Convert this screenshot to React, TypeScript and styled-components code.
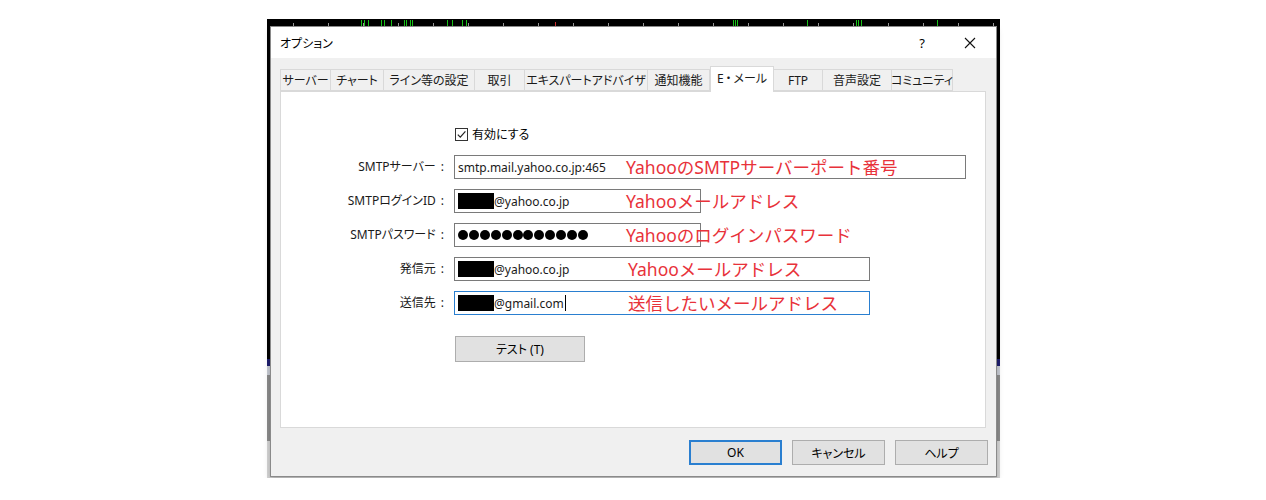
import React from 'react';
import styled, { createGlobalStyle } from 'styled-components';

const GlobalStyle = createGlobalStyle`
  body {
    margin: 0;
    background: #ffffff;
    font-family: "Noto Sans", "Noto Sans CJK JP", sans-serif;
  }
`;

const tabs = [
  { label: 'サーバー', width: 51 },
  { label: 'チャート', width: 53 },
  { label: 'ライン等の設定', width: 91 },
  { label: '取引', width: 50 },
  { label: 'エキスパートアドバイザ', width: 123 },
  { label: '通知機能', width: 62 },
  { label: 'E\u2009・\u2009メール', width: 64, active: true },
  { label: 'FTP', width: 49 },
  { label: '音声設定', width: 69 },
  { label: 'コミュニティ', width: 61 },
];

type FieldData = {
  label: string;
  width: number;
  value?: string;
  redact?: boolean;
  dots?: number;
  note: string;
  noteLeft: number;
  focused?: boolean;
  caret?: boolean;
};

const fields: FieldData[] = [
  { label: 'SMTPサーバー', width: 512, value: 'smtp.mail.yahoo.co.jp:465', note: 'YahooのSMTPサーバーポート番号', noteLeft: 172 },
  { label: 'SMTPログインID', width: 247, redact: true, value: '@yahoo.co.jp', note: 'Yahooメールアドレス', noteLeft: 172 },
  { label: 'SMTPパスワード', width: 247, dots: 12, note: 'Yahooのログインパスワード', noteLeft: 172 },
  { label: '発信元', width: 416, redact: true, value: '@yahoo.co.jp', note: 'Yahooメールアドレス', noteLeft: 174 },
  { label: '送信先', width: 416, redact: true, value: '@gmail.com', note: '送信したいメールアドレス', noteLeft: 174, focused: true, caret: true },
];

// chart ticks along the top edge of the terminal window behind the dialog
const whiteTicks = Array.from({ length: 21 }, (_, i) => 26 + i * 35);
const greenTicks = [94, 97, 101, 114, 117, 124, 137, 139, 143, 145, 180, 185, 195, 199, 466, 468, 470, 540, 589, 591, 594, 670];

const ChartTicks = () => (
  <svg width="733" height="7" viewBox="0 0 733 7" style={{ display: 'block' }}>
    {whiteTicks.map((x) => (
      <line key={`w${x}`} x1={x + 0.5} y1="4" x2={x + 0.5} y2="7" stroke="#9a9a9a" strokeWidth="1" />
    ))}
    {greenTicks.map((x) => (
      <line key={`g${x}`} x1={x + 0.5} y1="1" x2={x + 0.5} y2="7" stroke="#19c219" strokeWidth="1" />
    ))}
    <line x1="288.5" y1="3" x2="288.5" y2="7" stroke="#d03030" strokeWidth="1" />
  </svg>
);

const App = () => {
  return (
    <>
      <GlobalStyle />
      <Page>
        <ChartWindow>
          <ChartTicks />
          <Dialog>
            <TitleBar>
              <Title>オプション</Title>
              <TitleButton>?</TitleButton>
              <TitleButton>
                <svg width="12" height="12" viewBox="0 0 12 12">
                  <path d="M1 1 L11 11 M11 1 L1 11" stroke="#111" strokeWidth="1.1" fill="none" />
                </svg>
              </TitleButton>
            </TitleBar>

            <Body>
              <TabStrip>
                {tabs.map((t) => (
                  <Tab key={t.label} $width={t.width} $active={!!t.active}>
                    {t.label}
                  </Tab>
                ))}
              </TabStrip>

              <Panel>
                <Form>
                  <CheckRow>
                    <CheckBox>
                      <svg width="11" height="11" viewBox="0 0 11 11">
                        <path d="M1.8 5.6 L4.3 8.2 L9.4 2.4" stroke="#222" strokeWidth="1.2" fill="none" />
                      </svg>
                    </CheckBox>
                    有効にする
                  </CheckRow>

                  {fields.map((f) => (
                    <React.Fragment key={f.label}>
                      <Label>
                        {f.label}
                        <Colon>:</Colon>
                      </Label>
                      <FieldCell>
                        <InputBox $width={f.width} $focused={!!f.focused}>
                          {f.redact && <Redact />}
                          {f.value}
                          {f.dots && Array.from({ length: f.dots }, (_, i) => <Dot key={i} />)}
                          {f.caret && <Caret />}
                        </InputBox>
                        <Note $left={f.noteLeft}>{f.note}</Note>
                      </FieldCell>
                    </React.Fragment>
                  ))}

                  <TestRow>
                    <TestButton>テスト (T)</TestButton>
                  </TestRow>
                </Form>
              </Panel>

              <Footer>
                <DialogButton $primary>OK</DialogButton>
                <DialogButton>キャンセル</DialogButton>
                <DialogButton>ヘルプ</DialogButton>
              </Footer>
            </Body>
          </Dialog>
        </ChartWindow>
      </Page>
    </>
  );
};

const Page = styled.div`
  padding: 19px 0 0 267px;
`;

const ChartWindow = styled.div`
  width: 733px;
  height: 459px;
  display: flex;
  flex-direction: column;
  align-items: center;
  background: linear-gradient(
    to bottom,
    #000000 0px,
    #000000 340px,
    #1e1e6e 340px,
    #1e1e6e 347px,
    #c8ccd4 347px,
    #c8ccd4 356px,
    #8d8d8d 356px,
    #8d8d8d 422px,
    #d6d6d6 422px
  );
`;

const Dialog = styled.div`
  box-sizing: border-box;
  width: 727px;
  height: 451px;
  border: 1px solid #8a8a8a;
  background: #f0f0f0;
  box-shadow: 0 3px 6px rgba(0, 0, 0, 0.22);
  display: flex;
  flex-direction: column;
  font-size: 12px;
  color: #000;
  font-feature-settings: "palt";
`;

const TitleBar = styled.div`
  height: 31px;
  background: #ffffff;
  display: flex;
  align-items: center;
  padding: 0 3px 0 9px;
`;

const Title = styled.div`
  flex: 1;
  font-size: 12px;
`;

const TitleButton = styled.div`
  width: 46px;
  height: 31px;
  display: flex;
  align-items: center;
  justify-content: center;
  font-size: 13px;
  margin-left: 2px;
`;

const Body = styled.div`
  flex: 1;
  display: flex;
  flex-direction: column;
  padding: 8px 10px 0 9px;
`;

const TabStrip = styled.div`
  height: 25px;
  display: flex;
  align-items: flex-end;
`;

const Tab = styled.div<{ $width: number; $active: boolean }>`
  box-sizing: border-box;
  width: ${(p) => p.$width}px;
  height: ${(p) => (p.$active ? 26 : 22)}px;
  margin-bottom: ${(p) => (p.$active ? -1 : 0)}px;
  border: 1px solid #d9d9d9;
  border-bottom: ${(p) => (p.$active ? 'none' : '1px solid #d9d9d9')};
  border-left: ${(p) => (p.$active ? '1px solid #d9d9d9' : 'none')};
  background: ${(p) => (p.$active ? '#ffffff' : '#f0f0f0')};
  position: relative;
  z-index: ${(p) => (p.$active ? 1 : 0)};
  display: flex;
  align-items: center;
  justify-content: center;
  padding-bottom: ${(p) => (p.$active ? 3 : 0)}px;
  white-space: nowrap;
  font-size: 12px;
  color: #1a1a1a;

  &:first-child {
    border-left: 1px solid #d9d9d9;
  }
`;

const Panel = styled.div`
  box-sizing: border-box;
  height: 337px;
  background: #ffffff;
  border: 1px solid #d9d9d9;
`;

const Form = styled.div`
  display: grid;
  grid-template-columns: 166px auto;
  column-gap: 7px;
  row-gap: 10px;
  align-items: center;
  padding-top: 35px;
`;

const CheckRow = styled.div`
  grid-column: 2;
  height: 14px;
  margin-bottom: 4px;
  display: flex;
  align-items: center;
  gap: 4px;
  padding-left: 1px;
`;

const CheckBox = styled.span`
  box-sizing: border-box;
  width: 13px;
  height: 13px;
  border: 1px solid #333;
  display: flex;
  align-items: center;
  justify-content: center;
  background: #fff;
`;

const Label = styled.div`
  grid-column: 1;
  text-align: right;
  line-height: 24px;
  white-space: nowrap;
  color: #1a1a1a;
`;

const Colon = styled.span`
  margin-left: 5px;
  margin-right: 3px;
`;

const FieldCell = styled.div`
  grid-column: 2;
  position: relative;
  height: 24px;
`;

const InputBox = styled.div<{ $width: number; $focused: boolean }>`
  box-sizing: border-box;
  width: ${(p) => p.$width}px;
  height: 24px;
  border: 1px solid ${(p) => (p.$focused ? '#2a7fd0' : '#7a7a7a')};
  background: #ffffff;
  display: flex;
  align-items: center;
  padding-left: 3px;
  white-space: nowrap;
  font-size: 12px;
  color: #1a1a1a;
`;

const Redact = styled.span`
  width: 36px;
  height: 16px;
  background: #000;
`;

const Dot = styled.span`
  width: 10px;
  height: 10px;
  border-radius: 50%;
  background: #000;
  margin-right: 0.8px;
  margin-left: 0.1px;
`;

const Caret = styled.span`
  width: 1px;
  height: 16px;
  background: #000;
  margin-left: 1px;
`;

const Note = styled.span<{ $left: number }>`
  position: absolute;
  left: ${(p) => p.$left}px;
  top: 50%;
  transform: translateY(-54%);
  font-family: "Noto Sans", "Noto Sans CJK JP", sans-serif;
  font-feature-settings: normal;
  font-size: 17.5px;
  color: #e8323a;
  white-space: nowrap;
  pointer-events: none;
`;

const TestRow = styled.div`
  grid-column: 2;
  margin-top: 11px;
`;

const TestButton = styled.div`
  box-sizing: border-box;
  width: 130px;
  height: 26px;
  margin-left: 1px;
  background: #e1e1e1;
  border: 1px solid #adadad;
  display: flex;
  align-items: center;
  justify-content: center;
`;

const Footer = styled.div`
  display: flex;
  justify-content: flex-end;
  gap: 10px;
  padding: 12px 0 0 0;
  margin-right: -2px;
`;

const DialogButton = styled.div<{ $primary?: boolean }>`
  box-sizing: border-box;
  width: 93px;
  height: 25px;
  background: #e1e1e1;
  border: ${(p) => (p.$primary ? '2px solid #2a7fd0' : '1px solid #adadad')};
  display: flex;
  align-items: center;
  justify-content: center;
`;

export default App;
